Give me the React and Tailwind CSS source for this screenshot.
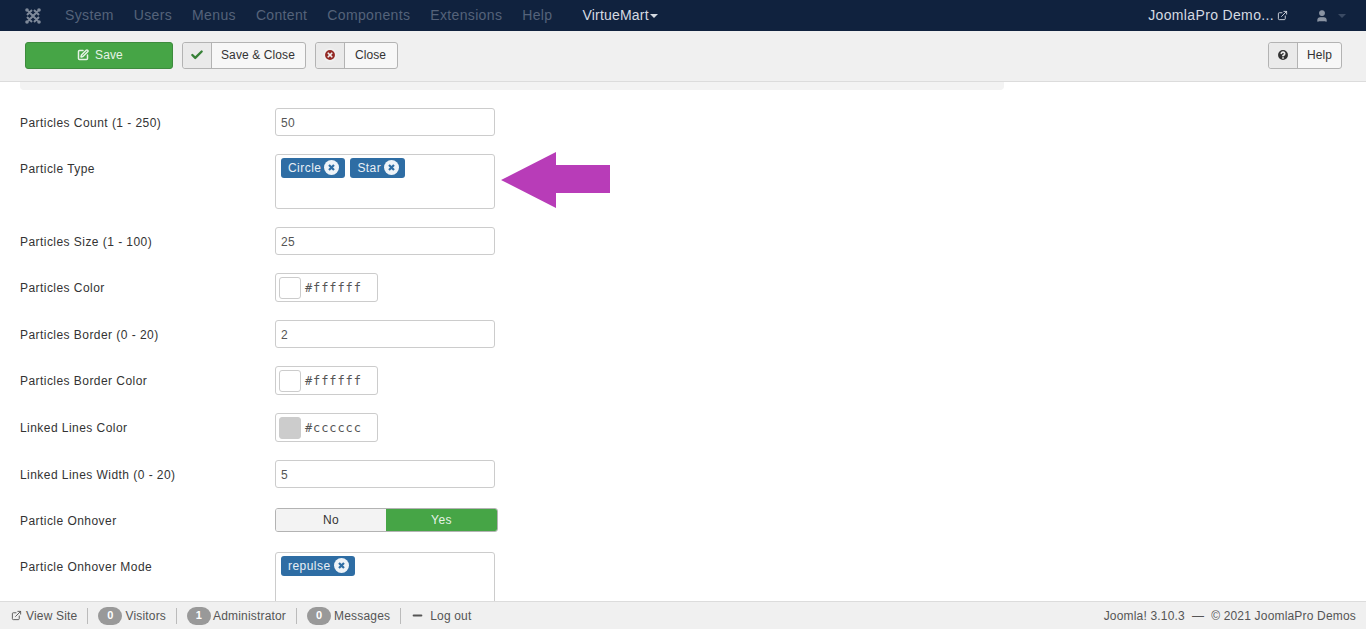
import { Check, CircleHelp, ExternalLink, Minus, SquarePen, User, XCircle } from 'lucide-react'

const NAV = ['System', 'Users', 'Menus', 'Content', 'Components', 'Extensions', 'Help']

function Tag({ text }) {
  return (
    <span className="flex h-[20px] items-center gap-[3px] rounded-[3px] bg-[#2e6da4] pl-[7px] pr-[6px] text-[#e8eff6]">
      {text}
      <svg width="15" height="15" viewBox="0 0 15 15" className="mb-[1px]">
        <circle cx="7.5" cy="7.5" r="7.5" fill="#eef3f8" />
        <path d="M5 5l5 5M10 5l-5 5" stroke="#2e6da4" strokeWidth="2.2" />
      </svg>
    </span>
  )
}

function Row({ label, children }) {
  return (
    <div className="mb-[18px] flex items-start">
      <label className="w-[255px] shrink-0 pt-[6px] text-[#333]">{label}</label>
      {children}
    </div>
  )
}

function TextField({ value }) {
  return (
    <div className="flex h-[28px] w-[220px] items-center rounded-[3px] border border-[#ccc] px-[5px] pt-[1px] text-[#555]">{value}</div>
  )
}

function ColorField({ value, swatch }) {
  return (
    <div className="flex h-[29px] w-[103px] items-center gap-[4px] rounded-[3px] border border-[#ccc] pl-[3px] font-['DejaVu_Sans_Mono',monospace] text-[12px] tracking-[0.9px] text-[#555]">
      <span className={`h-[22px] w-[22px] rounded-[3px] border border-[#ccc] ${swatch}`} />
      {value}
    </div>
  )
}

function TagBox({ tags }) {
  return (
    <div className="flex h-[55px] w-[220px] shrink-0 items-start gap-[5px] rounded-[3px] border border-[#ccc] px-[5px] pt-[3px]">
      {tags.map(t => <Tag key={t} text={t} />)}
    </div>
  )
}

function ToolButton({ icon, text, pad = 'px-[10px]' }) {
  return (
    <button className="flex h-[27px] items-stretch rounded-[3px] border border-[#b3b3b3] bg-[#f7f7f7] tracking-[0.1px] text-[#333]">
      <span className="flex w-[29px] items-center justify-center rounded-l-[3px] border-r border-[#b3b3b3] bg-[#eaeaea]">{icon}</span>
      <span className={`flex items-center ${pad}`}>{text}</span>
    </button>
  )
}

function Badge({ n }) {
  return (
    <span className="flex h-[18px] w-[24px] items-center justify-center rounded-full bg-[#999] text-[11px] font-bold text-white">{n}</span>
  )
}

const Sep = () => <span className="mx-[10px] h-[16px] w-px bg-[#bbb]" />

export default function App() {
  return (
    <div className="flex h-[629px] w-[1366px] flex-col overflow-hidden bg-white font-['Liberation_Sans',Arial,sans-serif] text-[12px] tracking-[0.45px]">
      {/* Top nav */}
      <div className="flex h-[31px] shrink-0 items-center bg-[#10223e] text-[14px] tracking-[0.35px] text-[#55637a]">
        <svg width="18" height="18" viewBox="0 0 18 18" className="ml-[24px] mr-[23px]" fill="none" stroke="#7f8a9a" strokeWidth="2">
          <path d="M4 4l10 10M14 4L4 14M3 8l5-5M10 15l5-5M3 10l5 5M10 3l5 5" />
          <circle cx="3" cy="3" r="1.8" fill="#7f8a9a" stroke="none" />
          <circle cx="15" cy="3" r="1.8" fill="#7f8a9a" stroke="none" />
          <circle cx="3" cy="15" r="1.8" fill="#7f8a9a" stroke="none" />
          <circle cx="15" cy="15" r="1.8" fill="#7f8a9a" stroke="none" />
        </svg>
        <div className="flex gap-[20px]">
          {NAV.map(n => <span key={n}>{n}</span>)}
        </div>
        <span className="ml-[30px] tracking-[0.2px] text-[#d5dae2]">VirtueMart</span>
        <span className="ml-[1px] mt-[1px] h-0 w-0 border-x-[4px] border-t-[4px] border-x-transparent border-t-[#d5dae2]" />
        <span className="ml-auto text-[#d5dae2]">JoomlaPro Demo...</span>
        <ExternalLink size={11} className="ml-[3px] text-[#d5dae2]" />
        <User size={14} fill="#8a94a3" className="ml-[27px] text-[#8a94a3]" />
        <span className="ml-[9px] mr-[20px] mt-[1px] h-0 w-0 border-x-[4px] border-t-[4px] border-x-transparent border-t-[#3a4a63]" />
      </div>

      {/* Toolbar */}
      <div className="flex h-[51px] shrink-0 items-center border-b border-[#dcdcdc] bg-[#f0f0f0] pb-[2px] pl-[25px] pr-[24px]">
        <button className="mr-[9px] flex h-[27px] w-[148px] items-center justify-center gap-[6px] rounded-[3px] border border-[#3d8b3d] bg-[#46a546] pl-[2px] tracking-[0.1px] text-[#e6f3e6]">
          <SquarePen size={12} strokeWidth={3} />
          Save
        </button>
        <div className="flex gap-[9px]">
          <ToolButton icon={<Check size={14} strokeWidth={4} className="text-[#378137]" />} text="Save & Close" pad="pl-[9px] pr-[10px]" />
          <ToolButton icon={<XCircle size={14} fill="#942a25" strokeWidth={3} className="text-[#f0f0f0]" />} text="Close" pad="pl-[10px] pr-[11px]" />
        </div>
        <div className="ml-auto">
          <ToolButton icon={<CircleHelp size={14} fill="#333" strokeWidth={3} className="text-[#eaeaea]" />} text="Help" pad="px-[9px]" />
        </div>
      </div>

      {/* Form */}
      <div className="min-h-0 flex-1 overflow-hidden pl-[20px]">
        <div className="mb-[18px] h-[8px] w-[984px] rounded-b-[4px] bg-[#f3f3f3]" />
        <Row label="Particles Count (1 - 250)"><TextField value="50" /></Row>
        <Row label="Particle Type">
          <TagBox tags={['Circle', 'Star']} />
          {/* annotation arrow */}
          <svg width="110" height="57" viewBox="0 0 110 57" className="-mb-[2px] -mt-[2px] ml-[6px]">
            <path d="M0 28L55 0V13H109V41H55V56Z" fill="#b83cb8" />
          </svg>
        </Row>
        <Row label="Particles Size (1 - 100)"><TextField value="25" /></Row>
        <Row label="Particles Color"><ColorField value="#ffffff" swatch="bg-white" /></Row>
        <Row label="Particles Border (0 - 20)"><TextField value="2" /></Row>
        <Row label="Particles Border Color"><ColorField value="#ffffff" swatch="bg-white" /></Row>
        <Row label="Linked Lines Color"><ColorField value="#cccccc" swatch="bg-[#ccc]" /></Row>
        <Row label="Linked Lines Width (0 - 20)"><TextField value="5" /></Row>
        <Row label="Particle Onhover">
          <div className="my-[2px] flex h-[24px] w-[223px] overflow-hidden rounded-[3px] border border-[#b3b3b3]">
            <span className="flex w-[110px] items-center justify-center bg-[#f3f3f3] text-[#333]">No</span>
            <span className="flex flex-1 items-center justify-center bg-[#46a546] text-[#e6f3e6]">Yes</span>
          </div>
        </Row>
        <Row label="Particle Onhover Mode">
          <TagBox tags={['repulse']} />
        </Row>
      </div>

      {/* Status bar */}
      <div className="flex h-[28px] shrink-0 items-center border-t border-[#dcdcdc] bg-[#f0f0f0] pl-[11px] pr-[10px] tracking-[0.18px] text-[#555]">
        <ExternalLink size={11} className="mr-[4px]" />
        View Site
        <Sep />
        <Badge n="0" /><span className="ml-[3px]">Visitors</span>
        <Sep />
        <Badge n="1" /><span className="ml-[2px]">Administrator</span>
        <Sep />
        <Badge n="0" /><span className="ml-[3px]">Messages</span>
        <Sep />
        <Minus size={13} strokeWidth={4} className="mr-[6px]" />
        Log out
        <span className="ml-auto">Joomla! 3.10.3 &nbsp;— &nbsp;© 2021 JoomlaPro Demos</span>
      </div>
    </div>
  )
}
